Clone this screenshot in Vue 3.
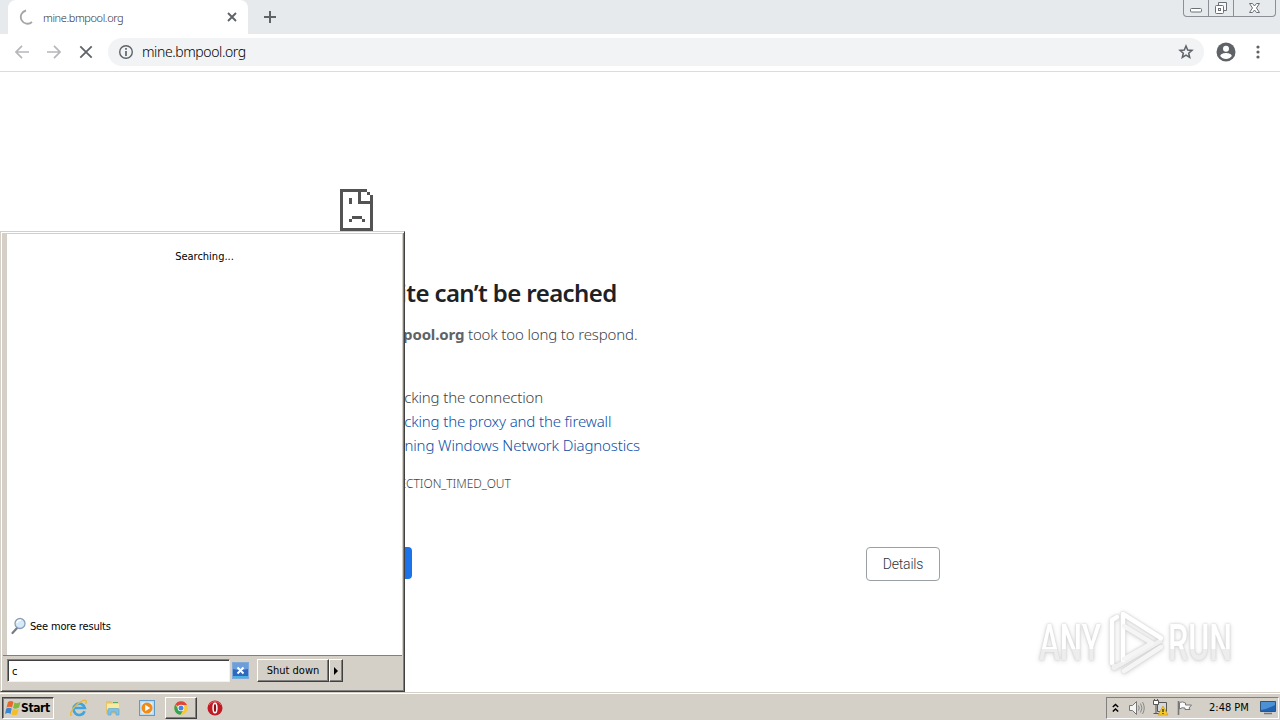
<script setup>
import { ref } from 'vue'

const address = ref('mine.bmpool.org')
const query = ref('c')
const suggestions = [
  { text: 'Checking the connection', link: false },
  { text: 'Checking the proxy and the firewall', link: true },
  { text: 'Running Windows Network Diagnostics', link: true }
]
</script>

<template>
  <div class="desktop">
    <div class="browser">
      <div class="tab-strip">
        <div class="tab">
          <svg class="spinner" width="16" height="16" viewBox="0 0 16 16">
            <path d="M7 1.5A6.7 6.7 0 1 0 13 13" fill="none" stroke="#a3a6a9" stroke-width="1.8" />
          </svg>
          <span class="tab-title">{{ address }}</span>
          <svg class="tab-close" width="10" height="10" viewBox="0 0 10 10">
            <path d="M1 1l8 8M9 1L1 9" stroke="#5f6368" stroke-width="1.9" />
          </svg>
        </div>
        <svg class="new-tab" width="12" height="12" viewBox="0 0 12 12">
          <path d="M6 0v12M0 6h12" stroke="#5f6368" stroke-width="2" />
        </svg>
        <div class="window-controls">
          <span class="control">
            <svg width="14" height="16" viewBox="0 0 14 16">
              <rect x="1.5" y="8.5" width="11" height="3.5" rx="1" fill="#fff" stroke="#6b7078" />
            </svg>
          </span>
          <span class="control">
            <svg width="14" height="16" viewBox="0 0 14 16">
              <path d="M4.5 5.5v-3h8v8h-3" fill="#f6f7f8" stroke="#6b7078" />
              <rect x="1.5" y="5.5" width="8" height="8" rx="1" fill="#fff" stroke="#6b7078" />
              <rect x="4.5" y="8.5" width="2" height="2" fill="none" stroke="#6b7078" />
            </svg>
          </span>
          <span class="control wide">
            <svg width="14" height="16" viewBox="0 0 14 16">
              <path d="M1.5 3.5h3l2 2.500 2-2.500h3L8.500 8l3 4.500h-3l-2-2.500-2 2.500h-3l3-4.500z" fill="#fff" stroke="#6b7078" />
            </svg>
          </span>
        </div>
      </div>

      <div class="toolbar">
        <svg class="nav" width="14" height="14" viewBox="0 0 14 14">
          <path d="M14 7H1.5M7 .8L1 7l6 6.2" fill="none" stroke="#b5b7ba" stroke-width="1.7" />
        </svg>
        <svg class="nav" width="14" height="14" viewBox="0 0 14 14">
          <path d="M0 7h12.5M7 .8L13 7l-6 6.2" fill="none" stroke="#b5b7ba" stroke-width="1.7" />
        </svg>
        <svg class="nav stop" width="14" height="14" viewBox="0 0 14 14">
          <path d="M1.3 1.3l11.4 11.4M12.7 1.3L1.3 12.7" stroke="#5f6368" stroke-width="1.8" />
        </svg>
        <div class="omnibox">
          <svg width="16" height="16" viewBox="0 0 16 16">
            <circle cx="8" cy="8" r="6.3" fill="none" stroke="#5f6368" stroke-width="1.4" />
            <path d="M8 4v1.7M8 7v5" stroke="#5f6368" stroke-width="1.7" />
          </svg>
          <span class="url">{{ address }}</span>
          <svg class="star" width="16" height="16" viewBox="0 0 16 16">
            <path d="M8 2l1.7 4 4.3.4-3.3 2.8 1 4.3L8 11.2l-3.7 2.3 1-4.3L2 6.4 6.3 6z" fill="none" stroke="#5f6368" stroke-width="1.5" />
          </svg>
        </div>
        <svg class="avatar" width="20" height="20" viewBox="0 0 20 20">
          <circle cx="10" cy="10" r="9.5" fill="#5f6368" />
          <circle cx="10" cy="6.7" r="3" fill="#fff" />
          <path d="M4.2 14c.5-2.200 3.700-3 5.800-3s5.300.8 5.800 3c-1.400 1.900-3.400 3-5.800 3s-4.400-1.100-5.800-3z" fill="#fff" />
        </svg>
        <svg class="menu-dots" width="4" height="14" viewBox="0 0 4 14">
          <circle cx="2" cy="2" r="1.6" fill="#5f6368" />
          <circle cx="2" cy="7" r="1.6" fill="#5f6368" />
          <circle cx="2" cy="12" r="1.6" fill="#5f6368" />
        </svg>
      </div>

      <div class="page">
        <div class="error">
          <svg class="sad-page" width="33" height="42" viewBox="0 0 33 42" shape-rendering="crispEdges">
            <path d="M0 0h27v3h3v3h3v36H0zM3 3v36h27V15H18V3zM21 3v9h9V6h-3V3z" fill="#535353" fill-rule="evenodd" />
            <path d="M9 9h3v6H9zM12 27h10v3H12zM9 30h3v3H9zM22 30h3v3h-3z" fill="#535353" />
          </svg>
          <h1>This site can’t be reached</h1>
          <p class="summary"><strong>{{ address }}</strong> took too long to respond.</p>
          <p class="try">Try:</p>
          <ul>
            <li v-for="item in suggestions" :key="item.text" :class="{ link: item.link }">
              <span>{{ item.text }}</span>
            </li>
          </ul>
          <div class="code">ERR_CONNECTION_TIMED_OUT</div>
          <div class="buttons">
            <button class="reload">Reload</button>
            <button class="details">Details</button>
          </div>
        </div>
      </div>
    </div>

    <svg class="watermark" width="220" height="76" viewBox="0 0 220 76">
      <defs>
        <linearGradient id="fade" x1="0" y1="0" x2="0" y2="1">
          <stop offset="0.6" stop-color="#fff" />
          <stop offset="0.61" stop-color="#ededed" />
        </linearGradient>
      </defs>
      <g class="mark-text" fill="url(#fade)">
        <text x="9" y="54" textLength="62" lengthAdjust="spacingAndGlyphs">ANY</text>
        <text x="138" y="54" textLength="64" lengthAdjust="spacingAndGlyphs">RUN</text>
      </g>
      <g fill="none" stroke-width="4.500" stroke-linejoin="round" stroke-linecap="round">
        <path d="M82 57V14l5-3" stroke="#fff" />
        <path d="M84 60v2l46-27" stroke="#f0f0f0" />
        <path d="M93 54V8l38 24" stroke="#fff" />
        <path d="M94 20l28 17-28 16M94 65l37-24" stroke="#f5f5f5" />
      </g>
    </svg>

    <div class="start-menu">
      <div class="results">
        <div class="searching">Searching...</div>
        <div class="more">
          <svg width="16" height="18" viewBox="0 0 16 18">
            <path d="M6.5 10.5L1.5 16" stroke="#777b86" stroke-width="2.2" stroke-linecap="round" />
            <circle cx="9" cy="6.5" r="5" fill="#d5ebfb" stroke="#8d9eb4" stroke-width="1.3" />
            <path d="M6 6a3.2 3.2 0 0 1 4-2.7" fill="none" stroke="#fff" stroke-width="1.5" />
          </svg>
          <span>See more results</span>
        </div>
      </div>
      <div class="search-row">
        <div class="search-box">{{ query }}</div>
        <svg class="clear" width="17" height="17" viewBox="0 0 17 17">
          <rect x=".5" y=".5" width="16" height="16" fill="#2f68bd" stroke="#7fa9d9" />
          <path d="M1 1h15v6Q8 9 1 7z" fill="#6d9ddb" />
          <path d="M1 14h15v2H1z" fill="#45b4e4" />
          <path d="M5.5 5.5l6 6M11.5 5.5l-6 6" stroke="#fff" stroke-width="2" />
        </svg>
        <div class="shutdown">
          <span class="raised label">Shut down</span>
          <span class="raised arrow">
            <svg width="4" height="8" viewBox="0 0 4 8"><path d="M0 0l4 4-4 4z" fill="#000" /></svg>
          </span>
        </div>
      </div>
    </div>

    <div class="taskbar">
      <div class="start-button">
        <svg width="16" height="16" viewBox="0 0 16 16">
          <path d="M3 2q3-2 5.5 0L7 7.5Q4.5 6 1.5 7.5z" fill="#e8682c" />
          <path d="M9.5 2.5Q12 4 15.5 2L14 7.5q-3 2-6 .5z" fill="#82b83b" />
          <path d="M1.2 8.5Q4 7 6.7 8.5L5.5 14Q3 12 0 14z" fill="#3c86d1" />
          <path d="M7.8 9q3 1.5 6 0l-1.5 5.5q-3 1.5-6 0z" fill="#f5bd2c" />
        </svg>
        <span>Start</span>
      </div>
      <div class="quick-launch">
        <div class="task">
          <svg width="18" height="18" viewBox="0 0 18 18">
            <path d="M14.6 12.2A5.7 5.7 0 1 1 14.8 9H5" fill="none" stroke="#3fa5df" stroke-width="2.7" />
            <path d="M2 15.5C-1 18 0 11.5 7 5.500S18 0 15.500 5" fill="none" stroke="#e9b93c" stroke-width="1.5" />
          </svg>
        </div>
        <div class="task">
          <svg width="18" height="18" viewBox="0 0 18 18">
            <path d="M2 2h5l1 1.500h7V15H2z" fill="#e3c468" />
            <path d="M3 4.500h12V11H3z" fill="#f8eaa0" />
            <path d="M9 3.500h5" stroke="#55aa63" />
            <path d="M4 16v-5.500q0-1 1-1h9q1 0 1 1V16h-3v-3H7v3z" fill="#80c2e3" stroke="#66a7cb" stroke-width=".7" />
          </svg>
        </div>
        <div class="task">
          <svg width="18" height="18" viewBox="0 0 18 18">
            <rect x="1.5" y="1.5" width="15" height="15" fill="#b9dbf1" stroke="#609ac6" />
            <rect x="3.5" y="3.5" width="11" height="11" fill="#e7f2fa" />
            <circle cx="9" cy="9" r="5.5" fill="#f28a17" />
            <path d="M7.2 5.7l5 3.3-5 3.300z" fill="#fff" />
          </svg>
        </div>
        <div class="task active">
          <svg width="16" height="16" viewBox="0 0 16 16">
            <circle cx="8" cy="8" r="6.7" fill="#f7ca35" />
            <path d="M8 8L2.2 4.6A6.7 6.7 0 0 1 14 5H8z" fill="#df463b" />
            <path d="M2.2 4.6A6.7 6.7 0 0 0 7.5 14.7L10.5 9.5h-5z" fill="#36a257" />
            <circle cx="8" cy="8" r="3.3" fill="#fff" />
            <circle cx="8" cy="8" r="2.5" fill="#4a84dc" />
          </svg>
        </div>
        <div class="task">
          <svg width="16" height="16" viewBox="0 0 16 16">
            <circle cx="8" cy="8" r="7.5" fill="#c21a25" />
            <path d="M2 5a7 7 0 0 1 12 0" fill="none" stroke="#e5666b" />
            <ellipse cx="8" cy="8" rx="1.9" ry="4.8" fill="#8e1018" stroke="#fff" stroke-width="1.5" />
          </svg>
        </div>
      </div>
      <div class="tray">
        <svg class="chevron" width="7" height="10" viewBox="0 0 7 10">
          <path d="M.8 4l2.7-2.500L6.200 4M.8 8.500L3.500 6l2.700 2.500" fill="none" stroke="#000" stroke-width="1.5" />
        </svg>
        <svg class="volume" width="18" height="16" viewBox="0 0 18 16">
          <path d="M1.500 5.500h3l4-4v13l-4-4h-3z" fill="#f5f5f3" stroke="#777" />
          <path d="M10.500 5.500q1.500 2.500 0 5M12.500 3.500q3 4.500 0 9M14.500 2q3.500 6 0 12" fill="none" stroke="#888" />
        </svg>
        <svg class="network" width="17" height="17" viewBox="0 0 17 17">
          <path d="M5.500 3.500h9v9h-9z" fill="#d5d9dc" stroke="#565656" />
          <path d="M1.500 1.500h5v4h-5zM4 5.500v9M1.500 14.500h7M2.500 0v2M5.500 0v2" fill="#fff" stroke="#565656" />
          <path d="M11 7l5 9H6z" fill="#f6ca27" stroke="#c69c23" stroke-width=".7" />
          <path d="M11 10v3M11 14v1" stroke="#222" stroke-width="1.2" />
        </svg>
        <svg class="flag" width="16" height="16" viewBox="0 0 16 16">
          <path d="M1.500 1v14" stroke="#777" stroke-width="1.6" />
          <path d="M2.500 2.500q3-1.500 6 .5v2h6l-2.500 3 1 1.500H8V8Q5 7 2.500 9z" fill="#fafafa" stroke="#777" />
        </svg>
        <span class="clock">2:48 PM</span>
        <svg class="show-desktop" width="16" height="15" viewBox="0 0 16 15">
          <path d="M.5 1.500h15v10H.5z" fill="#2262b1" stroke="#315579" />
          <path d="M1 2h14v3Q8 9 1 10z" fill="#4d91d5" />
          <path d="M4 13.500h8" stroke="#647b90" stroke-width="1.5" />
        </svg>
      </div>
    </div>
  </div>
</template>

<style>
body {
  margin: 0;
  overflow: hidden;
}
</style>

<style scoped>
.desktop {
  position: relative;
  display: flex;
  flex-direction: column;
  width: 1280px;
  height: 720px;
  overflow: hidden;
  background: #fff;
  font-family: "DejaVu Sans Condensed", "DejaVu Sans", sans-serif;
  font-size: 11px;
  color: #000;
}

svg {
  display: block;
  flex: none;
}

span,
.code,
h1,
p {
  white-space: nowrap;
}

.browser {
  flex: 1;
  min-height: 0;
  overflow: hidden;
  font-family: "Noto Sans", "Open Sans", sans-serif;
  font-weight: 300;
}

.tab-strip {
  display: flex;
  height: 34px;
  padding-left: 8px;
  background: #e6eaed;
}

.tab {
  display: flex;
  align-items: center;
  box-sizing: border-box;
  width: 240px;
  padding: 0 11px;
  border-radius: 8px 8px 0 0;
  background: #fff;
}

.tab-title {
  flex: 1;
  margin-left: 8px;
  font-size: 11px;
  letter-spacing: -0.4px;
  color: #303337;
}

.new-tab {
  margin: 11px 0 0 16px;
}

.window-controls {
  display: flex;
  box-sizing: border-box;
  width: 93px;
  height: 17px;
  margin: 0 4px 0 auto;
  border: 1px solid #8b9096;
  border-top: none;
  border-radius: 0 0 4px 4px;
}

.control {
  display: flex;
  justify-content: center;
  width: 24px;
  border-right: 1px solid #8b9096;
}

.control.wide {
  flex: 1;
  border-right: none;
}

.toolbar {
  display: flex;
  align-items: center;
  box-sizing: border-box;
  height: 38px;
  padding: 0 0 2px 15px;
  border-bottom: 1px solid #dadce0;
  background: #fff;
}

.nav {
  margin-right: 18px;
}

.nav.stop {
  margin-right: 15px;
}

.omnibox {
  display: flex;
  align-items: center;
  box-sizing: border-box;
  width: 1096px;
  height: 28px;
  padding: 0 10px;
  border-radius: 14px;
  background: #f1f3f4;
}

.url {
  flex: 1;
  margin-left: 8px;
  font-size: 14px;
  letter-spacing: -0.4px;
  color: #000;
}

.avatar {
  margin-left: 12px;
}

.menu-dots {
  margin-left: 20px;
}

.page {
  height: 620px;
}

.error {
  width: 600px;
  margin: 0 auto;
  padding-top: 117px;
  font-size: 15px;
  color: #404448;
}

h1 {
  margin: 46px 0 0;
  font-size: 24px;
  font-weight: 600;
  line-height: 32px;
  letter-spacing: -0.6px;
  text-indent: -2px;
  color: #202124;
}

.summary {
  margin: 13px 0 0;
  line-height: 24px;
  letter-spacing: -0.15px;
  text-indent: -2px;
}

.summary strong {
  font-weight: 700;
  color: #5f6368;
}

.try {
  margin: 15px 0 0;
  line-height: 24px;
}

ul {
  margin: 0;
  padding-left: 38px;
}

li {
  line-height: 24px;
  letter-spacing: -0.14px;
}

li.link {
  color: #0b50a8;
}

.code {
  margin-top: 17px;
  font-size: 12px;
  line-height: 20px;
  letter-spacing: -0.06px;
}

.buttons {
  display: flex;
  justify-content: space-between;
  margin-top: 53px;
}

.buttons button {
  box-sizing: border-box;
  height: 34px;
  border: 1px solid #9aa0a6;
  border-radius: 4px;
  background: #fff;
  font-family: Roboto, sans-serif;
  font-size: 14px;
  font-weight: 300;
  letter-spacing: -0.2px;
  color: #303438;
}

.buttons .details {
  width: 74px;
  padding: 0;
}

.buttons .reload {
  width: 72px;
  height: 32px;
  padding: 0;
  border: none;
  background: #1a73e8;
  color: #fff;
}

.watermark {
  position: absolute;
  left: 1030px;
  top: 606px;
  overflow: visible;
  filter: drop-shadow(0 0 1px #ccc) drop-shadow(0 1px 2px #ddd);
}

.mark-text {
  font-family: Roboto, sans-serif;
  font-size: 50px;
  font-weight: 500;
}

/* start menu lies over the browser window */
.start-menu {
  position: absolute;
  left: 0;
  top: 231px;
  display: flex;
  flex-direction: column;
  box-sizing: border-box;
  width: 405px;
  height: 461px;
  border: 1px solid #d4d0c8;
  border-right-color: #404040;
  border-bottom-color: #404040;
  background: #d4d0c8;
  box-shadow: inset 1px 1px #fff, inset -1px -1px #808080;
}

.results {
  display: flex;
  flex-direction: column;
  justify-content: space-between;
  box-sizing: border-box;
  height: 422px;
  margin: 1px 2px 0 6px;
  padding: 16px 0 20px;
  border-top: 1px solid #d4d0c8;
  background: #fff;
}

.searching {
  line-height: 14px;
  text-align: center;
}

.more {
  display: flex;
  align-items: center;
  gap: 3px;
  height: 18px;
  padding-left: 4px;
  letter-spacing: -0.17px;
}

.search-row {
  display: flex;
  align-items: flex-start;
  flex: 1;
  margin: 0 2px;
  padding: 3px 0 0 4px;
  border-top: 1px solid #808080;
}

.search-box {
  box-sizing: border-box;
  width: 223px;
  height: 23px;
  padding-left: 4px;
  border: 1px solid #808080;
  border-right-color: #f4f2ed;
  border-bottom-color: #f4f2ed;
  background: #fff;
  box-shadow: inset 1px 1px #404040;
  line-height: 23px;
}

.clear {
  margin: 3px 0 0 2px;
}

.shutdown {
  display: flex;
  margin-left: 8px;
}

.raised {
  display: flex;
  align-items: center;
  justify-content: center;
  box-sizing: border-box;
  height: 23px;
  border: 1px solid #fff;
  border-right-color: #404040;
  border-bottom-color: #404040;
  box-shadow: inset -1px -1px #808080;
}

.raised.label {
  width: 72px;
}

.raised.arrow {
  width: 14px;
}

.taskbar {
  display: flex;
  align-items: center;
  box-sizing: border-box;
  height: 28px;
  padding: 2px 1px 0 2px;
  border-top: 1px solid #d4d0c8;
  background: #d4d0c8;
  box-shadow: inset 0 1px #fff;
}

.start-button {
  display: flex;
  align-items: center;
  box-sizing: border-box;
  width: 52px;
  height: 22px;
  padding-left: 2px;
  border: 1px solid #404040;
  border-right-color: #fff;
  border-bottom-color: #fff;
  box-shadow: inset 1px 1px #808080;
  font-size: 12px;
  font-weight: bold;
  letter-spacing: -0.4px;
}

.quick-launch {
  display: flex;
  margin-left: 8px;
}

.task {
  display: flex;
  align-items: center;
  justify-content: center;
  box-sizing: border-box;
  width: 34px;
  height: 22px;
}

.task.active {
  width: 32px;
  margin: 0 1px;
  border: 1px solid #fff;
  border-right-color: #404040;
  border-bottom-color: #404040;
  box-shadow: inset -1px -1px #808080;
}

.tray {
  display: flex;
  align-items: center;
  box-sizing: border-box;
  width: 173px;
  height: 22px;
  margin-left: auto;
  padding-left: 5px;
  border: 1px solid #808080;
  border-right-color: #fff;
  border-bottom-color: #fff;
}

.volume {
  margin-left: 9px;
}

.network {
  margin-left: 6px;
}

.flag {
  margin-left: 8px;
}

.clock {
  margin-left: 16px;
}

.show-desktop {
  margin: 0 2px 0 auto;
}
</style>
